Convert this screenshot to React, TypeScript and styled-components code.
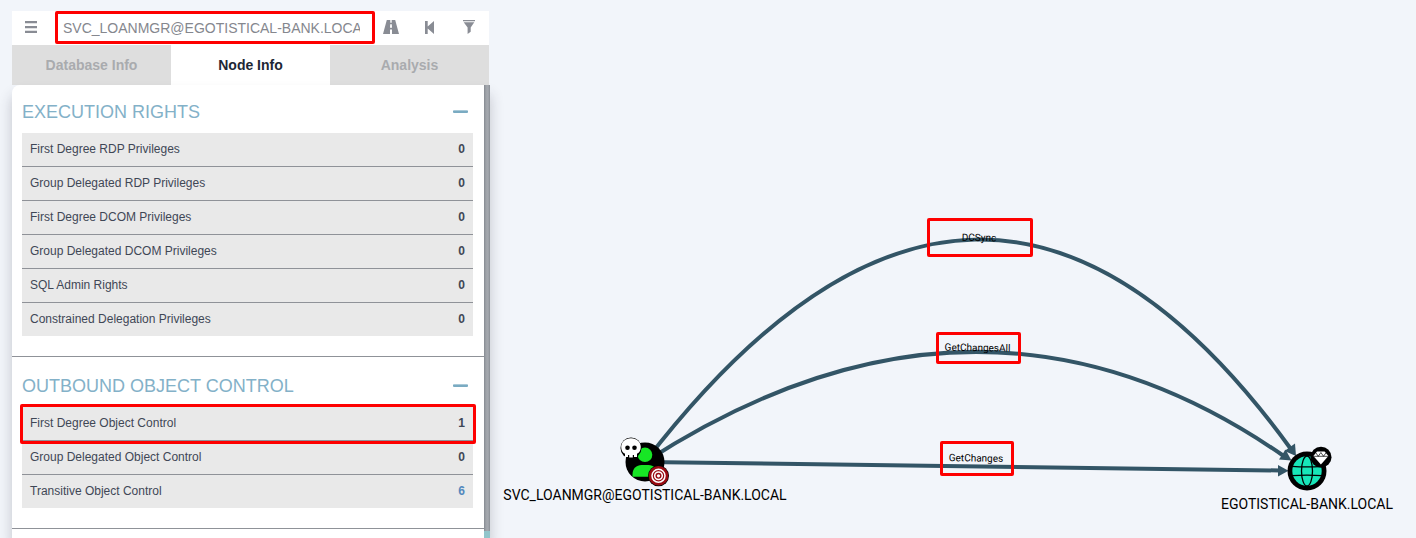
import React from 'react';
import styled, { createGlobalStyle } from 'styled-components';

const GlobalStyle = createGlobalStyle`
  html, body { margin: 0; height: 100%; overflow: hidden; background: #f2f5fa; }
  * { box-sizing: border-box; }
`;

const Page = styled.div`
  position: relative;
  width: 1416px;
  height: 538px;
  overflow: hidden;
  padding: 11px 0 0 12px;
  background: #f2f5fa;
  font-family: 'Liberation Sans', Arial, sans-serif;
`;

const Panel = styled.aside`
  display: flex;
  flex-direction: column;
  width: 478px;
  height: 527px;
`;

const Toolbar = styled.div`
  display: flex;
  align-items: center;
  flex: 0 0 34px;
  width: 477px;
  background: #fff;
  color: #898c94;
`;

const ToolButton = styled.button<{ $width: number; $gap?: number }>`
  display: flex;
  flex: none;
  align-items: center;
  justify-content: center;
  width: ${p => p.$width}px;
  height: 34px;
  margin-left: ${p => p.$gap ?? 0}px;
  padding: 0 0 2px;
  border: 0;
  background: none;
  color: inherit;

  svg { display: block; }
`;

const SearchInput = styled.input`
  flex: none;
  width: 297px;
  height: 20px;
  margin: 0 0 0 13px;
  padding: 0;
  border: 0;
  outline: 0;
  background: none;
  font-family: inherit;
  font-size: 14px;
  line-height: 20px;
  color: #85878e;
`;

const Tabs = styled.nav`
  display: flex;
  flex: 0 0 40px;
  width: 477px;
`;

const Tab = styled.div<{ $active?: boolean }>`
  flex: 1;
  text-align: center;
  font-size: 14px;
  font-weight: bold;
  line-height: 40px;
  color: ${p => (p.$active ? '#1d2735' : '#a9abae')};
  background: ${p => (p.$active ? '#fff' : '#dedede')};
`;

const Body = styled.div`
  display: flex;
  flex: 1;
  min-height: 0;
  border-radius: 8px 0 0 0;
  background: #fff;
  box-shadow: 0 10px 14px rgba(40, 40, 60, 0.24);
`;

const Content = styled.div`
  flex: 1;
  min-width: 0;
  overflow: hidden;
`;

const Scrollbar = styled.div`
  display: flex;
  flex-direction: column;
  width: 6px;
  background: #92c5cb;
`;

const Thumb = styled.div`
  height: 446px;
  background: linear-gradient(90deg, #858a91 0, #9fa3a9 2px, #a5a9af 4px, #898e95 6px);
`;

const Section = styled.section<{ $top: number }>`
  padding: ${p => p.$top}px 11px 20px 10px;
  border-bottom: 1px solid #8f9298;
`;

const SectionHead = styled.div`
  display: flex;
  align-items: center;
  justify-content: space-between;
  height: 22px;
  margin-bottom: 10px;
  padding-right: 5px;
  color: #83b1c8;
  font-size: 18px;
`;

const Minus = styled.span`
  width: 15px;
  height: 3px;
  margin-bottom: 1px;
  border-radius: 1px;
  background: linear-gradient(#a9c9d8 0, #a9c9d8 1px, #7aabc2 1px);
`;

const Row = styled.div`
  display: flex;
  justify-content: space-between;
  height: 34px;
  padding: 0 8px;
  border-bottom: 1px solid #8f9298;
  background: #e9e9e9;
  color: #3f4756;
  font-size: 12px;
  line-height: 32px;

  &:last-child { height: 33px; border-bottom: 0; }
`;

const Count = styled.b<{ $link?: boolean }>`
  color: ${p => (p.$link ? '#5288bd' : 'inherit')};
`;

const Graph = styled.svg`
  position: absolute;
  top: 0;
  left: 0;
  pointer-events: none;
`;

const Highlight = styled.div<{ $x: number; $y: number; $w: number; $h: number }>`
  position: absolute;
  left: ${p => p.$x}px;
  top: ${p => p.$y}px;
  width: ${p => p.$w}px;
  height: ${p => p.$h}px;
  border: 3px solid #fe0000;
  border-radius: 2px;
`;

type Entry = { label: string; count: number; link?: boolean };

const executionRights: Entry[] = [
  { label: 'First Degree RDP Privileges', count: 0 },
  { label: 'Group Delegated RDP Privileges', count: 0 },
  { label: 'First Degree DCOM Privileges', count: 0 },
  { label: 'Group Delegated DCOM Privileges', count: 0 },
  { label: 'SQL Admin Rights', count: 0 },
  { label: 'Constrained Delegation Privileges', count: 0 },
];

const outboundControl: Entry[] = [
  { label: 'First Degree Object Control', count: 1 },
  { label: 'Group Delegated Object Control', count: 0 },
  { label: 'Transitive Object Control', count: 6, link: true },
];

function InfoSection({ title, entries, top }: { title: string; entries: Entry[]; top: number }) {
  return (
    <Section $top={top}>
      <SectionHead>{title}<Minus /></SectionHead>
      <div>
        {entries.map(e => (
          <Row key={e.label}>
            <span>{e.label}</span>
            <Count $link={e.link}>{e.count}</Count>
          </Row>
        ))}
      </div>
    </Section>
  );
}

function UserNode() {
  return (
    <g>
      <circle cx="645" cy="462" r="19.5" fill="#000" />
      <circle cx="645" cy="454.8" r="7.3" fill="#17e625" />
      <path d="M632.500 476.800v-2.300c0-6 4-9.500 9-9.500h7c5 0 9 3.500 9 9.500v2.300z" fill="#17e625" />
      <circle cx="631" cy="448" r="10.500" fill="#000" />
      <path d="M631 438.200c-5.700 0-9.800 3.600-9.800 8.800 0 3.200 1.300 5.600 3.800 6.800v3.200h3v-2h1.200v2.500h3.600v-2.500h1.200v2h3v-3.200c2.500-1.200 3.800-3.600 3.800-6.800 0-5.200-4.100-8.800-9.800-8.800z" fill="#fff" />
      <circle cx="627.500" cy="447.800" r="2.300" fill="#000" />
      <circle cx="634.500" cy="447.800" r="2.300" fill="#000" />
      <circle cx="658.500" cy="475.800" r="10.500" fill="#000" />
      <circle cx="658.500" cy="475.800" r="9.800" fill="#990b12" />
      <g fill="none" stroke="#fff" strokeWidth="1.500">
        <circle cx="658.500" cy="475.800" r="6.500" />
        <circle cx="658.500" cy="475.800" r="3.800" />
      </g>
      <circle cx="658.500" cy="475.800" r="1.600" fill="#fff" />
    </g>
  );
}

function DomainNode() {
  return (
    <g>
      <circle cx="1307" cy="471" r="19.500" fill="#000" />
      <circle cx="1307" cy="471" r="14.700" fill="#17e6b9" />
      <g fill="none" stroke="#000" strokeWidth="1.300">
        <ellipse cx="1307" cy="471" rx="5.500" ry="15" />
        <path d="M1292 466.300q15 1 30 0M1292 475.700q15-1 30 0" />
      </g>
      <circle cx="1321" cy="457.200" r="10.500" fill="#000" />
      <path d="M1317 451.600h7.600l3.800 4.500-7.500 8.400-7.500-8.400z" fill="#fff" />
      <path d="M1313.500 456.300h15M1316 453l2.300 3.300 2.600-3.800 2.600 3.800 2.300-3.300" fill="none" stroke="#000" strokeWidth="0.700" />
    </g>
  );
}

export default function App() {
  return (
    <Page>
      <GlobalStyle />
      <Panel>
        <Toolbar>
          <ToolButton $width={38} aria-label="Menu">
            <svg width="12" height="12" viewBox="0 0 12 12" fill="currentColor">
              <path d="M0 0h12v2.300H0zM0 4.900h12v2.300H0zM0 9.700h12V12H0z" />
            </svg>
          </ToolButton>
          <SearchInput readOnly defaultValue="SVC_LOANMGR@EGOTISTICAL-BANK.LOCAL" />
          <ToolButton $width={62} aria-label="Pathfinding">
            <svg width="16" height="14" viewBox="0 0 16 14" fill="currentColor">
              <path fillRule="evenodd" d="M3.800 0h3.500v2.700h1.400V0h3.500L16 14H9V9.500H7V14H0zM7.200 4.300L7 7.800h2l-.2-3.500z" />
            </svg>
          </ToolButton>
          <ToolButton $width={15} aria-label="Back">
            <svg width="9" height="13" viewBox="0 0 9 13" fill="currentColor">
              <path d="M0 0h2.700v5.500L9 0v13L2.700 7.500V13H0z" />
            </svg>
          </ToolButton>
          <ToolButton $width={26} $gap={19} aria-label="Filter">
            <svg width="12" height="14" viewBox="0 0 12 14" fill="currentColor">
              <path d="M0 0h12v1.300H0zM.7 2.300h10.600L7.700 7.400v4.300L4.600 14V7.400z" />
            </svg>
          </ToolButton>
        </Toolbar>
        <Tabs>
          <Tab>Database Info</Tab>
          <Tab $active>Node Info</Tab>
          <Tab>Analysis</Tab>
        </Tabs>
        <Body>
          <Content>
            <InfoSection title="EXECUTION RIGHTS" entries={executionRights} top={16} />
            <InfoSection title="OUTBOUND OBJECT CONTROL" entries={outboundControl} top={18} />
          </Content>
          <Scrollbar><Thumb /></Scrollbar>
        </Body>
      </Panel>

      <Graph width="1416" height="538" viewBox="0 0 1416 538" fontFamily="Roboto, sans-serif">
        <g fill="none" stroke="#335566" strokeWidth="4">
          <path d="M645 462Q982 24 1290.500 448.500" />
          <path d="M645 462Q979 245 1283 455.500" />
          <path d="M645 462L1280 470.500" />
        </g>
        <g fill="#335566">
          <path d="M1296 456L1284.500 451L1295 443.500z" />
          <path d="M1291.500 460.500L1279 459.500L1285.500 449.500z" />
          <path d="M1288.500 470.700L1278 476.500V465z" />
        </g>
        <g fontSize="10" textAnchor="middle" fill="#000">
          <text x="979" y="241" transform="rotate(0.8 979 241)">DCSync</text>
          <text x="977.500" y="351" transform="rotate(0.8 977 351)">GetChangesAll</text>
          <text x="976" y="461.500" transform="rotate(0.8 976 461)">GetChanges</text>
        </g>
        <UserNode />
        <DomainNode />
        <g fontSize="14" textAnchor="middle" fill="#000">
          <text x="645" y="500">SVC_LOANMGR@EGOTISTICAL-BANK.LOCAL</text>
          <text x="1307" y="509">EGOTISTICAL-BANK.LOCAL</text>
        </g>
      </Graph>

      <Highlight $x={55} $y={11} $w={320} $h={33} />
      <Highlight $x={20} $y={404} $w={456} $h={40} />
      <Highlight $x={927} $y={218} $w={106} $h={39} />
      <Highlight $x={936} $y={332} $w={85} $h={32} />
      <Highlight $x={940} $y={441} $w={74} $h={35} />
    </Page>
  );
}
